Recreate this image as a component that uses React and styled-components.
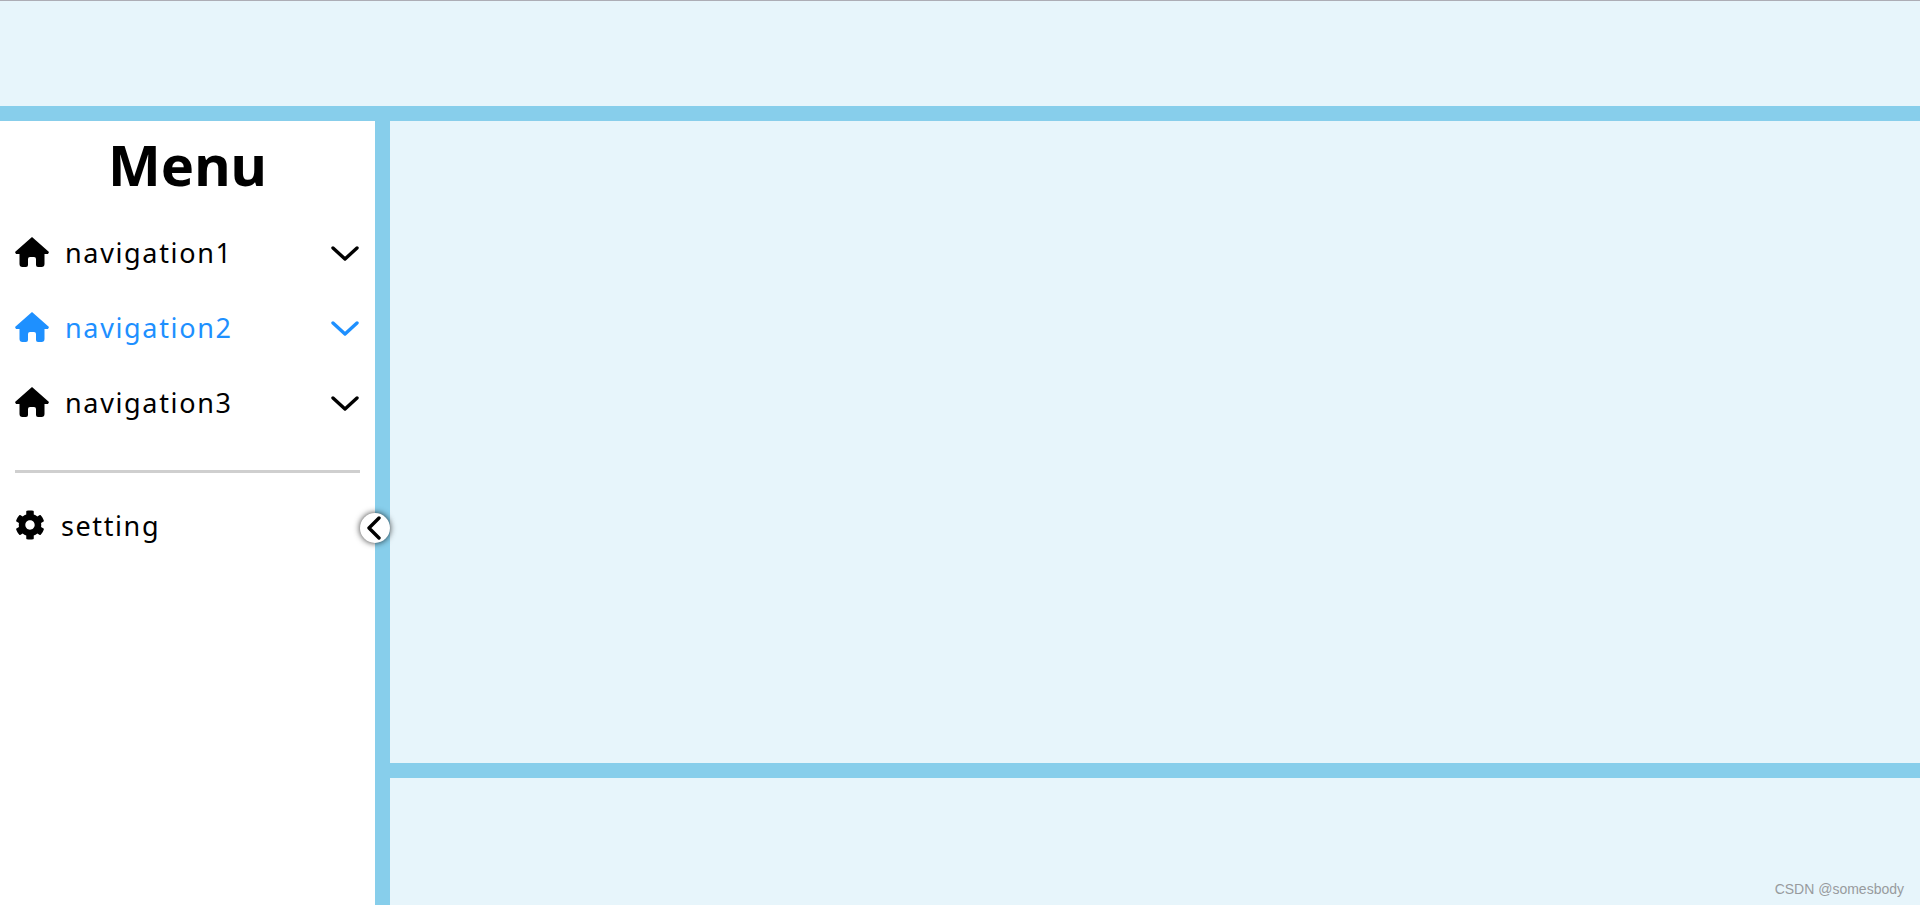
import styled, { createGlobalStyle } from "styled-components";
import { FaCog } from "react-icons/fa";

const GlobalStyle = createGlobalStyle`
  html, body {
    margin: 0;
    padding: 0;
    height: 100%;
    overflow: hidden;
  }
  * {
    box-sizing: border-box;
  }
`;

const Page = styled.div`
  position: relative;
  width: 100%;
  height: 905px;
  display: grid;
  grid-template-rows: 105px 1fr;
  row-gap: 15px;
  background: #87ceeb;
  border-top: 1px solid #adadb5;
  font-family: "Noto Sans", "Open Sans", sans-serif;
`;

const Header = styled.header`
  background: #e7f5fb;
`;

const Body = styled.div`
  display: grid;
  grid-template-columns: 375px 1fr;
  column-gap: 15px;
  min-height: 0;
`;

const Sidebar = styled.aside`
  position: relative;
  background: #fff;
  padding: 0 15px;
`;

const Title = styled.h1`
  margin: 0;
  height: 94px;
  padding-bottom: 8px;
  display: flex;
  align-items: center;
  justify-content: center;
  font-size: 56px;
  font-weight: 700;
  line-height: 1;
  color: #000;
`;

const Nav = styled.nav`
  display: flex;
  flex-direction: column;
`;

const NavItem = styled.div`
  height: 75px;
  display: flex;
  align-items: center;
  color: ${(p) => (p.$active ? "#1e90ff" : "#000")};
`;

const ItemIcon = styled.svg`
  flex: none;
  margin-top: -2px;
`;

const ItemLabel = styled.span`
  flex: 1;
  margin-left: 16px;
  font-size: 27px;
  letter-spacing: 1.65px;
`;

const ItemArrow = styled.svg`
  flex: none;
  margin: 3px 1px 0 0;
`;

const Divider = styled.hr`
  margin: 30px 0 0;
  border: 0;
  height: 3px;
  background: #cfcfcf;
`;

const SettingRow = styled.div`
  height: 104px;
  display: flex;
  align-items: center;
  color: #000;
`;

const SettingLabel = styled.span`
  margin-left: 16px;
  font-size: 27px;
  letter-spacing: 1.6px;
`;

const CollapseButton = styled.button`
  position: absolute;
  top: 392px;
  right: -15px;
  width: 30px;
  height: 30px;
  padding: 0 2px 0 0;
  border: 0;
  border-radius: 50%;
  background: #fff;
  box-shadow: 0 0 6px rgba(0, 0, 0, 0.8);
  display: flex;
  align-items: center;
  justify-content: center;
`;

const Main = styled.div`
  display: grid;
  grid-template-rows: 642px 1fr;
  row-gap: 15px;
  min-height: 0;
`;

const Content = styled.main`
  background: #e7f5fb;
`;

const Footer = styled.footer`
  background: #e7f5fb;
`;

const Watermark = styled.div`
  position: absolute;
  right: 16px;
  bottom: 8px;
  font-family: "Liberation Sans", Arial, sans-serif;
  font-size: 14px;
  line-height: 16px;
  color: #989b9e;
`;

const HomeIcon = () => (
  <ItemIcon width="34" height="30" viewBox="0 0 34 30" fill="currentColor">
    <path
      fillRule="evenodd"
      d="M17 0L34 15L33 17H29.5V27Q29.5 30 26.5 30H23Q21 30 21 28V22Q21 20 19 20H15Q13 20 13 22V28Q13 30 11 30H7.5Q4.5 30 4.5 27V17H1L0 15Z"
    />
  </ItemIcon>
);

const ChevronDown = () => (
  <ItemArrow width="28" height="16" viewBox="0 0 28 16" fill="none" stroke="currentColor" strokeWidth="3.4" strokeLinecap="round" strokeLinejoin="round">
    <path d="M2 2L14 13L26 2" />
  </ItemArrow>
);

const ChevronLeft = () => (
  <svg width="16" height="24" viewBox="0 0 16 24" fill="none" stroke="#000" strokeWidth="3.4" strokeLinecap="round" strokeLinejoin="round">
    <path d="M13 2L3 12L13 22" />
  </svg>
);

const items = ["navigation1", "navigation2", "navigation3"];

export default function App() {
  return (
    <>
      <GlobalStyle />
      <Page>
        <Header />
        <Body>
          <Sidebar>
            <Title>Menu</Title>
            <Nav>
              {items.map((label) => (
                <NavItem key={label} $active={label === "navigation2"}>
                  <HomeIcon />
                  <ItemLabel>{label}</ItemLabel>
                  <ChevronDown />
                </NavItem>
              ))}
            </Nav>
            <Divider />
            <SettingRow>
              <FaCog size={30} />
              <SettingLabel>setting</SettingLabel>
            </SettingRow>
            <CollapseButton>
              <ChevronLeft />
            </CollapseButton>
          </Sidebar>
          <Main>
            <Content />
            <Footer />
          </Main>
        </Body>
        <Watermark>CSDN @somesbody</Watermark>
      </Page>
    </>
  );
}
